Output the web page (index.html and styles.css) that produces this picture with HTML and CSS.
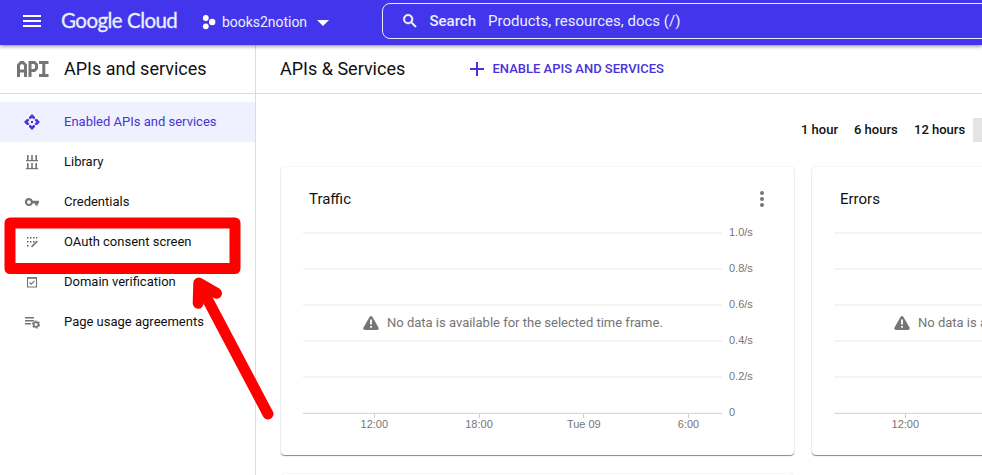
FILE: index.html
```html
<!DOCTYPE html>
<html lang="en">
<head>
<meta charset="utf-8">
<title>APIs and services</title>
<link rel="stylesheet" href="styles.css">
</head>
<body>
<header class="topbar">
  <svg class="menu" width="18" height="12" viewBox="0 0 18 12"><path fill="#fff" d="M0 0h18v2H0zM0 5h18v2H0zM0 10h18v2H0z"/></svg>
  <span class="logo"><span class="logo-google">Google</span><span class="logo-cloud">Cloud</span></span>
  <svg class="project-icon" width="14" height="16" viewBox="0 0 14 16"><g fill="#fff"><circle cx="3.8" cy="4" r="2.9"/><circle cx="10.200" cy="8" r="3.2"/><circle cx="3.8" cy="12.300" r="2.900"/></g></svg>
  <span class="project">books2notion</span>
  <svg class="caret" width="12" height="6" viewBox="0 0 12 6"><path fill="#fff" d="M0 0h12L6 6z"/></svg>
  <div class="search">
    <svg class="search-icon" width="18" height="18" viewBox="0 0 24 24"><path fill="#fff" stroke="#fff" stroke-width=".6" d="M15.5 14h-.79l-.28-.27A6.47 6.47 0 0 0 16 9.500 6.500 6.500 0 1 0 9.500 16c1.610 0 3.090-.59 4.230-1.570l.27.28v.79l5 4.990L20.490 19l-4.990-5zm-6 0C7.010 14 5 11.990 5 9.500S7.010 5 9.500 5 14 7.010 14 9.500 11.990 14 9.500 14z"/></svg>
    <span class="search-label">Search</span>
    <span class="search-hint">Products, resources, docs (/)</span>
  </div>
</header>
<div class="layout">
  <aside class="sidebar">
    <div class="side-head">
      <svg width="32" height="16" viewBox="0 0 32 16"><g fill="none" stroke="#757575" stroke-width="3"><path d="M1.500 16V4L4 1.500h2L8.500 4V16M1.500 10h7M13 16V1.500h4.500L19.500 3.500v4L17.500 9.500H13M22 1.500h9.500M26.800 1.500v13M22 14.500h9.500"/></g></svg>
      <span class="side-title">APIs and services</span>
    </div>
    <nav class="nav">
      <a class="item active">
        <svg width="16" height="16" viewBox="0 0 16 16"><path fill="#4733d8" d="M8 0l3 3v1.500l-1.200.8L8 3.700 6.200 5.300 5 4.500V3zM8 16l3-3v-1.500l-1.200-.8L8 12.300l-1.800-1.600-1.200.8V13zM0 8l3-3h1.500l.8 1.200L3.700 8l1.600 1.800-.8 1.200H3zM16 8l-3-3h-1.500l-.8 1.200L12.300 8l-1.600 1.800.8 1.200H13zM7 7h2v2H7z"/></svg>
        <span>Enabled APIs and services</span></a>
      <a class="item">
        <svg width="16" height="16" viewBox="0 0 16 16"><path fill="#757575" d="M3 1h1.600v5h2.600V1h1.600v5h2.600V1H13v5h1v1.200H2V6h1zM3 9h1.600v5h2.600V9h1.600v5h2.600V9H13v5h1v1.200H2V14h1z"/></svg>
        <span>Library</span></a>
      <a class="item">
        <svg width="16" height="16" viewBox="0 0 16 16"><path fill="#757575" fill-rule="evenodd" d="M4.900 4a4 4 0 0 1 3.800 2.800H15v2.600h-1.200v2h-2.600v-2H8.700A4 4 0 1 1 4.900 4zm0 2.200a1.900 1.900 0 1 0 0 3.800 1.900 1.900 0 0 0 0-3.800z"/></svg>
        <span>Credentials</span></a>
      <a class="item">
        <svg width="16" height="16" viewBox="0 0 16 16"><path fill="#616161" d="M3 3h1.500v1.500H3zM6 3h1.500v1.500H6zM9 3h1.500v1.500H9zM12 3h1.300v1.500H12zM3 7h1.500v1.500H3zM6 7h1.500v1.500H6zM9 7h1.500v1.500H9zM3 11h1.500v1.500H3z"/><path d="M7.500 12.800l5.800-5.600" stroke="#757575" stroke-width="1.600"/></svg>
        <span>OAuth consent screen</span></a>
      <a class="item">
        <svg width="16" height="16" viewBox="0 0 16 16"><path fill="none" stroke="#757575" stroke-width="1.100" d="M3.500 3.500h9v9.500h-9zM5.500 8.500l1.700 1.700 3.300-3.300"/><path fill="#757575" d="M3 3h10v1.800H3z"/></svg>
        <span>Domain verification</span></a>
      <a class="item">
        <svg width="16" height="16" viewBox="0 0 16 16"><path fill="#757575" d="M1 3h9v1.400H1zM1 6h9v1.400H1zM1 9h6v1.400H1z"/><circle cx="12" cy="10.500" r="2.400" fill="none" stroke="#757575" stroke-width="1.700"/><circle cx="12" cy="10.500" r="3.500" fill="none" stroke="#757575" stroke-width="1.200" stroke-dasharray="1.830 1.835"/></svg>
        <span>Page usage agreements</span></a>
    </nav>
  </aside>
  <main class="main">
    <div class="page-head">
      <h1>APIs &amp; Services</h1>
      <svg class="plus" width="14" height="14" viewBox="0 0 14 14"><path fill="#4733d8" d="M6 0h2v6h6v2H8v6H6V8H0V6h6z"/></svg>
      <span class="enable">ENABLE APIS AND SERVICES</span>
    </div>
    <div class="times">
      <span class="h1x">1 hour</span><span class="h6x">6 hours</span><span class="h12x">12 hours</span><span class="selected-time"></span>
    </div>
    <div class="cards">
      <section class="card">
        <div class="card-head"><h2>Traffic</h2>
          <svg class="dots" width="4" height="16" viewBox="0 0 4 16"><g fill="#757575"><circle cx="2" cy="2" r="2"/><circle cx="2" cy="8" r="2"/><circle cx="2" cy="14" r="2"/></g></svg>
        </div>
        <svg class="chart" width="513" height="224" viewBox="0 0 513 224">
          <path class="grid" d="M22 2h419M22 38h419M22 74h419M22 110h419M22 146h419"/>
          <path class="axis" d="M22 182.300h419M93.500 183v4M198.500 183v4M302.500 183v4M407.500 183v4"/>
          <g class="ticks"><text x="448" y="5">1.0/s</text><text x="448" y="41">0.8/s</text><text x="448" y="77">0.6/s</text><text x="448" y="113">0.4/s</text><text x="448" y="149">0.2/s</text><text x="448" y="185">0</text></g>
          <g class="ticks mid"><text x="93.300" y="197.400">12:00</text><text x="198" y="197.400">18:00</text><text x="302.800" y="197.400">Tue 09</text><text x="407.500" y="197.400">6:00</text></g>
        </svg>
        <div class="empty"><svg width="16" height="14" viewBox="0 0 16 14"><path fill="#757575" d="M6.500 1Q8-1 9.500 1l6 10.500Q16.300 14 14 14H2Q-.3 14 .5 11.500z"/><path fill="#fff" d="M7.100 3.500h1.800v5H7.100zM7.100 10h1.800v1.800H7.100z"/></svg><span>No data is available for the selected time frame.</span></div>
      </section>
      <section class="card">
        <div class="card-head"><h2>Errors</h2></div>
        <svg class="chart" width="513" height="224" viewBox="0 0 513 224">
          <path class="grid" d="M22 2h419M22 38h419M22 74h419M22 110h419M22 146h419"/>
          <path class="axis" d="M22 182.300h419M93.500 183v4"/>
          <g class="ticks mid"><text x="93.300" y="197.400">12:00</text></g>
        </svg>
        <div class="empty"><svg width="16" height="14" viewBox="0 0 16 14"><path fill="#757575" d="M6.500 1Q8-1 9.500 1l6 10.500Q16.300 14 14 14H2Q-.3 14 .5 11.500z"/><path fill="#fff" d="M7.100 3.500h1.800v5H7.100zM7.100 10h1.800v1.800H7.100z"/></svg><span>No data is available for the selected time frame.</span></div>
      </section>
      <section class="card"></section>
    </div>
  </main>
</div>
<svg class="annotation" width="290" height="475" viewBox="0 0 290 475"><g fill="none" stroke="#f00" stroke-linejoin="round" stroke-linecap="round"><path stroke-width="11" d="M10 223h225v45.500H10z"/><path stroke-width="11" d="M268 414L202 289"/><path stroke-width="11" fill="#f00" d="M198.200 303.200L198.800 283L216.500 293.300"/></g></svg>
</body>
</html>
```

FILE: styles.css
```css
* { box-sizing: border-box; }
body { margin: 0; width: 982px; height: 475px; overflow: hidden; background: #fff; color: #101010; font: 13px/20px Roboto, sans-serif; }
svg { display: block; flex: none; }
span, h1, h2 { flex: none; white-space: nowrap; }

.topbar { position: relative; z-index: 2; display: flex; align-items: center; height: 45px; padding: 0 0 3px 23px; background: #4335ec; color: #e8f0fe; box-shadow: 0 1px 4px rgba(0, 0, 0, .5); }
.logo { display: flex; gap: 5px; width: 117px; margin: -2px 0 0 20px; color: #e8f0fe; font: 20.500px/26px Lato, sans-serif; -webkit-text-stroke: .3px #e8f0fe; }
.logo-google { letter-spacing: -.55px; }
.logo-cloud { letter-spacing: -.6px; }
.project-icon { margin: 1px 0 0 24px; }
.project { width: 86px; margin: 2px 0 0 6px; font-size: 14px; letter-spacing: -.03px; }
.caret { margin: 4px 0 0 9px; }
.search { display: flex; align-items: center; flex: none; width: 640px; height: 36px; margin-left: 53px; padding-left: 18px; border: 1px solid #e8eafd; border-radius: 8px; font-size: 15px; }
.search-label { width: 46px; margin-left: 10.500px; font-weight: 500; }
.search-hint { margin-left: 12.500px; }

.layout { display: flex; height: 430px; }
.sidebar { flex: none; width: 256px; border-right: 1px solid #dcdcdc; }
.side-head { display: flex; align-items: center; gap: 15px; height: 49px; padding-left: 17px; border-bottom: 1px solid #dcdcdc; }
.side-title { font-size: 18px; }
.nav { display: flex; flex-direction: column; padding-top: 8px; }
.item { display: flex; align-items: center; gap: 24px; height: 40px; padding-left: 24px; }
.active { background: #eff1fe; color: #4733d8; }

.main { flex: 1; min-width: 0; overflow: hidden; }
.page-head { display: flex; align-items: center; height: 49px; padding-left: 24px; border-bottom: 1px solid #dcdcdc; }
h1, h2 { margin: 0; font-weight: 400; }
h1 { width: 190px; font-size: 18px; }
.enable { margin-left: 8.500px; color: #4733d8; font-weight: 500; }
.times { display: flex; align-items: center; height: 24px; margin-top: 24px; padding-left: 545px; font-weight: 500; }
.h1x { width: 53px; }
.h6x { width: 60px; }
.h12x { width: 59px; }
.selected-time { width: 9px; height: 24px; background: #e4e4e4; }
.cards { display: grid; grid-template-columns: 513px 513px; gap: 19px 18px; margin: 25px 0 0 25px; }
.card { position: relative; height: 288px; border-radius: 4px; background: #fff; box-shadow: 0 1px 1px rgba(0, 0, 0, .45), 0 0 2px rgba(0, 0, 0, .12); }
.card-head { display: flex; align-items: center; justify-content: space-between; height: 64px; padding: 0 30px 0 28px; }
h2 { font-size: 15px; }
.chart { overflow: visible; }
.chart text { font: 11px "Liberation Sans", Arial, sans-serif; fill: #757575; }
.grid { stroke: #e9e9e9; fill: none; }
.axis { stroke: #cfcfcf; fill: none; }
.mid { text-anchor: middle; }
.empty { position: absolute; top: 146px; left: 82px; display: flex; align-items: center; gap: 8px; color: #757575; }
.annotation { position: absolute; z-index: 3; top: 0; left: 0; pointer-events: none; }
```
